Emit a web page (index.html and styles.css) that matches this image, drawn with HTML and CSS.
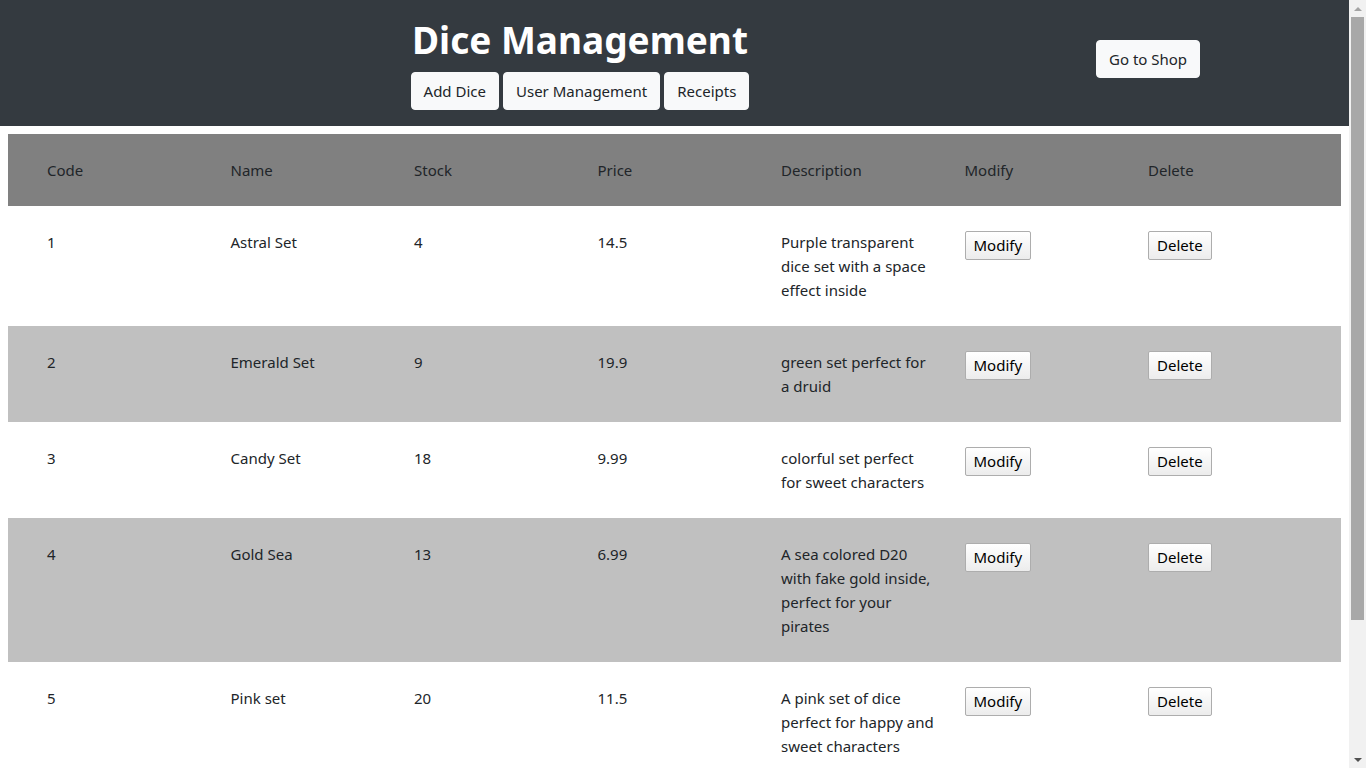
FILE: index.html
```html
<!DOCTYPE html>
<html lang="en">
<head>
<meta charset="utf-8">
<title>Dice Management</title>
<link rel="stylesheet" href="styles.css">
</head>
<body>
<header class="topbar">
  <div class="brand">
    <h1 class="title">Dice Management</h1>
    <nav class="nav">
      <button class="btn-light">Add Dice</button>
      <button class="btn-light">User Management</button>
      <button class="btn-light">Receipts</button>
    </nav>
  </div>
  <div class="shop">
    <button class="btn-light">Go to Shop</button>
  </div>
</header>
<main class="content">
  <table class="dice-table">
    <thead>
      <tr class="head-row">
        <th>Code</th><th>Name</th><th>Stock</th><th>Price</th><th>Description</th><th>Modify</th><th>Delete</th>
      </tr>
    </thead>
    <tbody>
      <tr class="row-light">
        <td>1</td><td>Astral Set</td><td>4</td><td>14.5</td>
        <td class="desc">Purple transparent dice set with a space effect inside</td>
        <td><button class="btn-plain">Modify</button></td>
        <td><button class="btn-plain">Delete</button></td>
      </tr>
      <tr class="row-dark">
        <td>2</td><td>Emerald Set</td><td>9</td><td>19.9</td>
        <td class="desc">green set perfect for a druid</td>
        <td><button class="btn-plain">Modify</button></td>
        <td><button class="btn-plain">Delete</button></td>
      </tr>
      <tr class="row-light">
        <td>3</td><td>Candy Set</td><td>18</td><td>9.99</td>
        <td class="desc">colorful set perfect for sweet characters</td>
        <td><button class="btn-plain">Modify</button></td>
        <td><button class="btn-plain">Delete</button></td>
      </tr>
      <tr class="row-dark">
        <td>4</td><td>Gold Sea</td><td>13</td><td>6.99</td>
        <td class="desc">A sea colored D20 with fake gold inside, perfect for your pirates</td>
        <td><button class="btn-plain">Modify</button></td>
        <td><button class="btn-plain">Delete</button></td>
      </tr>
      <tr class="row-light">
        <td>5</td><td>Pink set</td><td>20</td><td>11.5</td>
        <td class="desc">A pink set of dice perfect for happy and sweet characters</td>
        <td><button class="btn-plain">Modify</button></td>
        <td><button class="btn-plain">Delete</button></td>
      </tr>
    </tbody>
  </table>
</main>
<div class="scrollbar" aria-hidden="true">
  <div class="sb-arrow sb-up"></div>
  <div class="sb-track"><div class="sb-thumb"></div></div>
  <div class="sb-arrow sb-down"></div>
</div>
</body>
</html>
```

FILE: styles.css
```css
html, body {
  margin: 0;
  padding: 0;
}
body {
  font-family: "Noto Sans", "Open Sans", sans-serif;
  font-size: 15px;
  line-height: 24px;
  color: #212529;
  background: #fff;
  margin-right: 17px;
}
.topbar {
  background: #343a40;
  display: flex;
  align-items: flex-start;
  padding: 16px 0;
}
.brand {
  box-sizing: border-box;
  width: 1096px;
  padding-left: 64px;
  display: flex;
  flex-direction: column;
  align-items: center;
}
.title {
  margin: 0 0 8px 0;
  font-size: 37px;
  line-height: 48px;
  font-weight: 700;
  color: #fff;
}
.nav {
  display: flex;
  gap: 4px;
}
.shop {
  padding-top: 24px;
}
.btn-light {
  font-family: inherit;
  font-size: 15px;
  line-height: 24px;
  padding: 6px 12px;
  color: #212529;
  background: #f8f9fa;
  border: 1px solid #f8f9fa;
  border-radius: 4px;
}
.content {
  padding: 8px 8px 121px;
}
.dice-table {
  width: 100%;
  border-collapse: collapse;
  table-layout: fixed;
}
.dice-table th,
.dice-table td {
  box-sizing: border-box;
  text-align: left;
  vertical-align: top;
  font-weight: 400;
  padding: 24px 28px 24px 0;
  width: 183.5px;
}
.dice-table th:first-child,
.dice-table td:first-child {
  padding-left: 39px;
  width: 222.5px;
}
.dice-table th:last-child,
.dice-table td:last-child {
  width: auto;
}
.head-row {
  background: #808080;
}
.row-light {
  background: #fff;
}
.row-dark {
  background: #c0c0c0;
}
.btn-plain {
  font-family: inherit;
  font-size: 15px;
  line-height: 25px;
  padding: 1px 8px;
  margin-top: 1px;
  color: #000;
  background: linear-gradient(#ffffff, #ececec);
  border: 1px solid #adadad;
  border-radius: 2px;
  vertical-align: top;
}
.btn-plain + .btn-plain {
  margin-left: 0;
}
.scrollbar {
  position: fixed;
  top: 0;
  right: 0;
  width: 17px;
  height: 100vh;
  background: #f1f1f1;
  display: flex;
  flex-direction: column;
}
.sb-arrow {
  height: 17px;
  flex: 0 0 17px;
  display: flex;
  align-items: center;
  justify-content: center;
}
.sb-up::before {
  content: "";
  border-left: 4px solid transparent;
  border-right: 4px solid transparent;
  border-bottom: 4px solid #a3a3a3;
}
.sb-down::before {
  content: "";
  border-left: 4px solid transparent;
  border-right: 4px solid transparent;
  border-top: 4px solid #505050;
}
.sb-track {
  flex: 1;
  padding: 0 2px;
}
.sb-thumb {
  height: 603px;
  background: #a8a8a8;
}
```
